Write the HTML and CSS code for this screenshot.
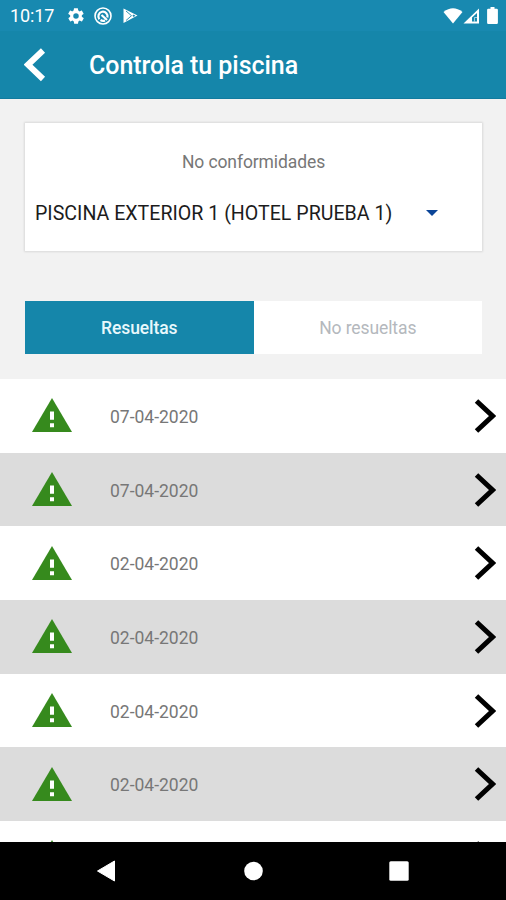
FILE: index.html
```html
<!DOCTYPE html>
<html lang="es">
<head>
    <meta charset="UTF-8">
    <meta name="viewport" content="width=device-width, initial-scale=1.0">
    <title>Controla tu piscina</title>
    <link rel="stylesheet" href="styles.css">
</head>
<body>

<svg class="symbols" width="0" height="0">
    <symbol id="warning" viewBox="0 0 40 34">
        <path d="M20 0L40 34H0z" fill="#368a1d"/>
        <path d="M18 13.5h4v8.3h-4zM18 25.2h4v4h-4z" fill="#fff"/>
    </symbol>
    <symbol id="chevron" viewBox="0 0 22 36">
        <path d="M2.5 3L18.5 18L2.5 33" fill="none" stroke="#000" stroke-width="5"/>
    </symbol>
</svg>

<div class="status-bar">
    <span class="clock">10:17</span>
    <svg class="settings-icon" width="18" height="18" viewBox="0.5 0.5 23 23" fill="#fff">
        <path d="M19.4 13c0-.3.1-.6.1-1s0-.7-.1-1l2.1-1.6c.2-.2.3-.4.1-.7l-2-3.4c-.1-.2-.4-.3-.6-.2l-2.5 1c-.5-.4-1.1-.7-1.7-1l-.4-2.6c0-.3-.2-.5-.5-.5h-4c-.3 0-.5.2-.5.4l-.4 2.7c-.6.2-1.2.6-1.7 1l-2.5-1c-.2-.1-.5 0-.6.2l-2 3.4c-.1.2-.1.5.1.7L4.6 11c0 .3-.1.6-.1 1s0 .7.1 1l-2.1 1.6c-.2.2-.3.5-.1.7l2 3.4c.1.2.4.3.6.2l2.5-1c.5.4 1.1.8 1.7 1l.4 2.7c0 .2.2.4.5.4h4c.3 0 .5-.2.5-.4l.4-2.7c.6-.3 1.2-.6 1.7-1l2.5 1c.2.1.5 0 .6-.2l2-3.4c.1-.2.1-.5-.1-.7L19.4 13zM12 15.5a3.5 3.5 0 1 1 0-7 3.5 3.5 0 0 1 0 7z"/>
    </svg>
    <svg class="sync-icon" width="18" height="18" viewBox="0 0 18 18" fill="none" stroke="#fff">
        <circle cx="9" cy="9" r="8" stroke-width="1.6"/>
        <path d="M5.4 12.2A4.6 4.6 0 1 1 13.4 10.5" stroke-width="2.2"/>
        <path d="M7.5 8L13 13M6.5 13a4.7 4.7 0 0 0 4.5 .4" stroke-width="2.2"/>
    </svg>
    <svg class="play-icon" width="15" height="16" viewBox="0 0 15 16">
        <path d="M0.5 0.5L14.5 7.5L0.5 15z" fill="#fff"/>
        <path d="M3 3L8.5 7.7L3 12.5" fill="none" stroke="#1788ae" stroke-width="0.9"/>
        <path d="M9.3 7.7L10.8 6.4L12.3 7.7L10.8 9z" fill="#1788ae"/>
    </svg>
    <div class="status-right">
        <svg width="20" height="16" viewBox="0 0 20 16">
            <path d="M0.5 4Q10 -3.5 19.5 4L10 15.5z" fill="#fff"/>
        </svg>
        <svg width="17" height="16" viewBox="0 0 17 16">
            <path d="M0.5 15.5L16 0.5V15.5z" fill="#fff"/>
            <path d="M9 13.5V9.5L14 5V13.5z" fill="#1788ae"/>
            <path d="M11.5 13.5V9.5H14" fill="none" stroke="#fff" stroke-width="0.6"/>
        </svg>
        <svg class="battery" width="11" height="17" viewBox="0 0 11 17">
            <path d="M3.5 0h4v1.7H9.7a1.2 1.2 0 0 1 1.2 1.2V15.8a1.2 1.2 0 0 1-1.2 1.2H1.3a1.2 1.2 0 0 1-1.2-1.2V2.9a1.2 1.2 0 0 1 1.2-1.2H3.5z" fill="#fff"/>
        </svg>
    </div>
</div>

<header class="app-bar">
    <svg class="back-icon" width="22" height="34" viewBox="0 0 22 34">
        <path d="M19 2.5L4 16.7L19 31" fill="none" stroke="#fff" stroke-width="6"/>
    </svg>
    <h1>Controla tu piscina</h1>
</header>

<main>
    <div class="card">
        <h2>No conformidades</h2>
        <div class="pool-select">
            <span>PISCINA EXTERIOR 1 (HOTEL PRUEBA 1)</span>
            <svg width="12" height="6" viewBox="0 0 12 6">
                <path d="M0 0h12L6 6z" fill="#0b4598"/>
            </svg>
        </div>
    </div>

    <div class="tabs">
        <div class="tab active">Resueltas</div>
        <div class="tab">No resueltas</div>
    </div>

    <div class="list">
        <div class="row">
            <svg class="warning"><use href="#warning"/></svg>
            <span>07-04-2020</span>
            <svg class="chevron"><use href="#chevron"/></svg>
        </div>
        <div class="row">
            <svg class="warning"><use href="#warning"/></svg>
            <span>07-04-2020</span>
            <svg class="chevron"><use href="#chevron"/></svg>
        </div>
        <div class="row">
            <svg class="warning"><use href="#warning"/></svg>
            <span>02-04-2020</span>
            <svg class="chevron"><use href="#chevron"/></svg>
        </div>
        <div class="row">
            <svg class="warning"><use href="#warning"/></svg>
            <span>02-04-2020</span>
            <svg class="chevron"><use href="#chevron"/></svg>
        </div>
        <div class="row">
            <svg class="warning"><use href="#warning"/></svg>
            <span>02-04-2020</span>
            <svg class="chevron"><use href="#chevron"/></svg>
        </div>
        <div class="row">
            <svg class="warning"><use href="#warning"/></svg>
            <span>02-04-2020</span>
            <svg class="chevron"><use href="#chevron"/></svg>
        </div>
        <!-- only the top edge of this one is visible -->
        <div class="row">
            <svg class="warning"><use href="#warning"/></svg>
            <svg class="chevron"><use href="#chevron"/></svg>
        </div>
    </div>
</main>

<nav class="nav-bar">
    <svg width="20" height="22" viewBox="0 0 20 22">
        <path d="M1.5 11L18.5 1V21z" fill="#fff" stroke="#fff" stroke-linejoin="round"/>
    </svg>
    <svg width="20" height="20" viewBox="0 0 20 20">
        <circle cx="10.5" cy="10" r="9.3" fill="#fff"/>
    </svg>
    <svg width="20" height="20" viewBox="0 0 20 20">
        <rect x="0.3" y="0.3" width="19.4" height="19.4" rx="1.5" fill="#fff"/>
    </svg>
</nav>

</body>
</html>
```
FILE: styles.css
```css
* {
    box-sizing: border-box;
}

body {
    display: flex;
    flex-direction: column;
    height: 900px;
    margin: 0;
    overflow: hidden;
    font-family: Roboto, sans-serif;
    background-color: #f2f2f2;
}

svg {
    display: block;
    flex: none;
}

.symbols {
    position: absolute;
}

.status-bar {
    display: flex;
    align-items: center;
    height: 31px;
    padding: 0 8px 0 10px;
    background-color: #1889b0;
    color: #fff;
}

.clock {
    width: 57px;
    font-size: 18px;
    letter-spacing: -0.1px;
}

.sync-icon {
    margin-left: 9px;
}

.play-icon {
    margin-left: 11px;
}

.status-right {
    display: flex;
    align-items: center;
    margin-left: auto;
}

.battery {
    margin-left: 7px;
}

.app-bar {
    display: flex;
    align-items: center;
    height: 68px;
    padding: 0 0 0 24px;
    background-color: #1586aa;
    border-bottom: 1px solid #117b9f;
}

.app-bar h1 {
    margin: 2px 0 0 43px;
    color: #fff;
    font-size: 25px;
    font-weight: 500;
    letter-spacing: -0.05px;
}

main {
    flex: 1;
    min-height: 0;
    overflow: hidden;
}

.card {
    height: 128px;
    margin: 24px 24px 0 25px;
    padding-top: 29px;
    background-color: #fff;
    box-shadow: 0 0 2px 1px rgba(0, 0, 0, 0.1);
}

.card h2 {
    margin: 0;
    color: #777;
    font-size: 17.5px;
    font-weight: 400;
    letter-spacing: -0.1px;
    line-height: 20px;
    text-align: center;
}

.pool-select {
    display: flex;
    align-items: center;
    justify-content: space-between;
    margin-top: 30px;
    padding: 0 44px 0 10px;
    color: #1c1c1c;
    font-size: 19.6px;
    line-height: 24px;
    white-space: nowrap;
}

.pool-select svg {
    margin-bottom: 2px;
}

.tabs {
    display: flex;
    height: 53px;
    margin: 50px 24px 25px 25px;
}

.tab {
    flex: 1;
    background-color: #fff;
    color: #b4b8bd;
    font-size: 17.5px;
    letter-spacing: -0.1px;
    line-height: 55px;
    text-align: center;
}

.tab.active {
    background-color: #1586aa;
    color: #e8f8fc;
    font-weight: 500;
}

.row {
    display: flex;
    align-items: center;
    height: 73.7px;
    padding: 0 10px 0 32px;
    background-color: #fff;
    color: #777;
    font-size: 17.5px;
}

.row:nth-child(even) {
    background-color: #dcdcdc;
}

.row span {
    margin: 2px 0 0 38px;
}

.warning {
    width: 40px;
    height: 34px;
    margin-bottom: 1px;
}

.chevron {
    width: 22px;
    height: 36px;
    margin-left: auto;
}

.nav-bar {
    display: flex;
    align-items: center;
    justify-content: space-between;
    height: 58px;
    padding: 0 97px 0 96px;
    background-color: #000;
}
```
